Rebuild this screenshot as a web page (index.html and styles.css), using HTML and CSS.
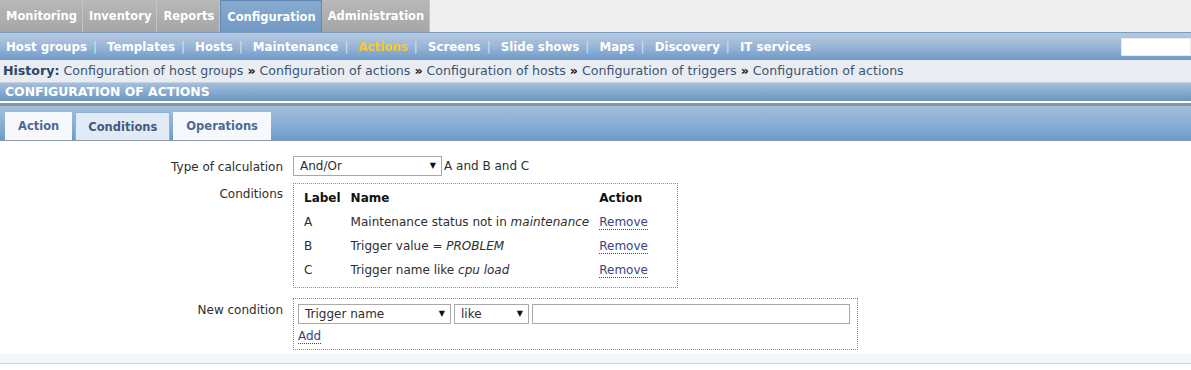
FILE: index.html
```html
<!DOCTYPE html>
<html lang="en">
<head>
    <meta charset="UTF-8">
    <title>Configuration of actions</title>
    <link rel="stylesheet" href="styles.css">
</head>
<body>

<!-- main menu -->
<div class="topmenu">
    <a class="toptab">Monitoring</a>
    <a class="toptab">Inventory</a>
    <a class="toptab">Reports</a>
    <a class="toptab selected">Configuration</a>
    <a class="toptab">Administration</a>
</div>

<!-- sub menu -->
<div class="submenu">
    <div class="sublinks">
        <a>Host groups</a><span class="sep">|</span>
        <a>Templates</a><span class="sep">|</span>
        <a>Hosts</a><span class="sep">|</span>
        <a>Maintenance</a><span class="sep">|</span>
        <a class="active">Actions</a><span class="sep">|</span>
        <a>Screens</a><span class="sep">|</span>
        <a>Slide shows</a><span class="sep">|</span>
        <a>Maps</a><span class="sep">|</span>
        <a>Discovery</a><span class="sep">|</span>
        <a>IT services</a>
    </div>
    <input type="text" class="search">
</div>

<div class="history">
    <b>History:</b> Configuration of host groups <span class="raquo">&raquo;</span> Configuration of actions <span class="raquo">&raquo;</span> Configuration of hosts <span class="raquo">&raquo;</span> Configuration of triggers <span class="raquo">&raquo;</span> Configuration of actions
</div>

<div class="header">CONFIGURATION OF ACTIONS</div>

<div class="tabsbar">
    <a class="tab">Action</a>
    <a class="tab current">Conditions</a>
    <a class="tab">Operations</a>
</div>

<div class="form">
    <div class="label">Type of calculation</div>
    <div class="field">
        <div class="select calc">And/Or <span class="arrow">&#9660;</span></div>
        <span>A and B and C</span>
    </div>

    <div class="label">Conditions</div>
    <div class="field">
        <div class="box">
            <table class="condtable">
                <tr><th>Label</th><th>Name</th><th>Action</th></tr>
                <tr><td>A</td><td>Maintenance status not in <i>maintenance</i></td><td><a class="link">Remove</a></td></tr>
                <tr><td>B</td><td>Trigger value = <i>PROBLEM</i></td><td><a class="link">Remove</a></td></tr>
                <tr><td>C</td><td>Trigger name like <i>cpu load</i></td><td><a class="link">Remove</a></td></tr>
            </table>
        </div>
    </div>

    <div class="label newcond">New condition</div>
    <div class="field">
        <div class="box newbox">
            <div class="newrow">
                <div class="select trig">Trigger name <span class="arrow">&#9660;</span></div>
                <div class="select like">like <span class="arrow">&#9660;</span></div>
                <input type="text" class="value">
            </div>
            <a class="link">Add</a>
        </div>
    </div>
</div>

<div class="footer"></div>

</body>
</html>
```

FILE: styles.css
```css
body {
    margin: 0;
    background-color: #ffffff;
    color: #2e2e2e;
    font-family: "DejaVu Sans", Verdana, sans-serif;
    font-size: 12px;
}

a {
    cursor: pointer;
}

/* main menu */
.topmenu {
    display: flex;
    height: 32px;
    background-color: #eeeeee;
}

.toptab {
    display: flex;
    align-items: center;
    padding: 0 5px 0 6px;
    color: #ffffff;
    font-weight: bold;
    font-size: 11.5px;
    background: linear-gradient(#b8b8b8, #a6a6a6);
    border-right: 1px solid #c4c4c4;
}

.toptab.selected {
    background: linear-gradient(#8aabd0, #7099c4);
    border: 1px solid #5f87b3;
    border-bottom: none;
}

/* sub menu */
.submenu {
    display: flex;
    align-items: center;
    justify-content: space-between;
    height: 27px;
    border-top: 1px solid #7a9cc1;
    background: linear-gradient(#b6c9e0, #9db8d8 45%, #6e9ac8);
}

.sublinks {
    padding-left: 6px;
    font-size: 11.8px;
    font-weight: bold;
    color: #ffffff;
}

.sublinks .active {
    color: #f7c82a;
}

.sep {
    color: #d5e0ee;
    font-weight: normal;
    padding: 0 6px;
}

.search {
    width: 64px;
    height: 14px;
    margin: 0;
    border: 1px solid #e8e8e8;
    padding: 1px 2px;
}

.history {
    height: 22px;
    line-height: 22px;
    padding-left: 3px;
    background-color: #e9edf1;
    color: #3c5474;
    font-size: 12.6px;
    border-bottom: 1px solid #c4d2e2;
}

.history b {
    color: #2c4666;
}

.raquo {
    font-weight: bold;
    color: #111111;
}

.header {
    height: 18px;
    line-height: 18px;
    padding-left: 5px;
    color: #ffffff;
    font-weight: bold;
    font-size: 12.4px;
    background: linear-gradient(#a7bfdb, #7ba2cc 70%, #6f94bb);
    border-bottom: 2px solid #ffffff;
    box-shadow: 0 3px 0 #8094a8;
}

.tabsbar {
    display: flex;
    align-items: flex-end;
    gap: 3px;
    height: 34px;
    margin-top: 3px;
    padding-left: 5px;
    background: linear-gradient(#a4bdd9, #8cb0d6 50%, #6b9bcb);
    border-bottom: 1px solid #8a9aaa;
}

.tab {
    height: 28px;
    line-height: 28px;
    padding: 0 13px;
    color: #4c6a92;
    font-weight: bold;
    font-size: 11.5px;
    background-color: #f6f8fb;
}

.tab.current {
    height: 27px;
    padding: 0 12px;
    background-color: #e2ebf5;
    border: 1px solid #8fb0d8;
    border-bottom: none;
    color: #3f5a7d;
}

/* form */
.form {
    display: grid;
    grid-template-columns: 283px auto;
    align-items: start;
    column-gap: 10px;
    row-gap: 7px;
    padding: 15px 0 4px;
    font-size: 12px;
}

.label {
    text-align: right;
    padding-top: 4px;
    color: #2e2e2e;
}

.label.newcond {
    padding-top: 8px;
}

.field {
    display: flex;
    align-items: center;
    gap: 2px;
}

.select {
    position: relative;
    display: flex;
    align-items: center;
    height: 18px;
    padding-left: 6px;
    border: 1px solid #a9a9a9;
    background-color: #ffffff;
    box-sizing: content-box;
}

.arrow {
    position: absolute;
    right: 5px;
    top: 4px;
    font-size: 8px;
    color: #111111;
}

.calc {
    width: 141px;
}

.box {
    border: 1px dotted #8a8a8a;
}

.condtable {
    border-collapse: collapse;
    margin: 4px 3px 5px 5px;
}

.condtable th {
    text-align: left;
    padding: 3px 5px 5px;
    color: #111111;
}

.condtable td {
    padding: 4px 5px 5px;
    height: 15px;
}

.condtable td:last-child {
    padding-right: 26px;
}

.link {
    color: #3b3f8a;
    border-bottom: 1px dotted #3b3f8a;
}

.newbox {
    width: 559px;
    height: 50px;
    margin-top: 3px;
    padding: 0 0 0 4px;
}

.newrow {
    display: flex;
    gap: 3px;
    margin: 5px 0 5px;
}

.trig {
    width: 145px;
}

.like {
    width: 67px;
}

.value {
    width: 312px;
    height: 16px;
    margin: 0;
    border: 1px solid #a9a9a9;
}

.footer {
    height: 9px;
    background-color: #f0f6fa;
    border-bottom: 1px solid #c6d4e2;
    box-shadow: 0 1px 0 #8ca2bb;
}
```
